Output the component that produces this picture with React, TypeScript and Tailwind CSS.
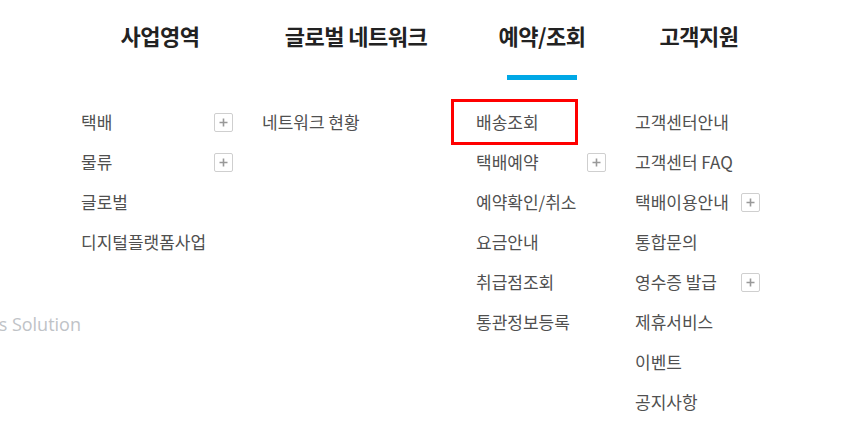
import React from "react";

type Item = { label: string; more?: boolean; marked?: boolean };

type Menu = {
  title: string;
  width: string;
  listPad: string;
  itemWidth: string;
  active?: boolean;
  items: Item[];
};

const menus: Menu[] = [
  {
    title: "사업영역",
    width: "w-[198px]",
    listPad: "pl-[20px]",
    itemWidth: "w-[152px]",
    items: [
      { label: "택배", more: true },
      { label: "물류", more: true },
      { label: "글로벌" },
      { label: "디지털플랫폼사업" },
    ],
  },
  {
    title: "글로벌 네트워크",
    width: "w-[194px]",
    listPad: "pl-[3px]",
    itemWidth: "w-[160px]",
    items: [{ label: "네트워크 현황" }],
  },
  {
    title: "예약/조회",
    width: "w-[178px]",
    listPad: "pl-[23px]",
    itemWidth: "w-[130px]",
    active: true,
    items: [
      { label: "배송조회", marked: true },
      { label: "택배예약", more: true },
      { label: "예약확인/취소" },
      { label: "요금안내" },
      { label: "취급점조회" },
      { label: "통관정보등록" },
    ],
  },
  {
    title: "고객지원",
    width: "w-[136px]",
    listPad: "pl-[4px]",
    itemWidth: "w-[125px]",
    items: [
      { label: "고객센터안내" },
      { label: "고객센터 FAQ" },
      { label: "택배이용안내", more: true },
      { label: "통합문의" },
      { label: "영수증 발급", more: true },
      { label: "제휴서비스" },
      { label: "이벤트" },
      { label: "공지사항" },
    ],
  },
];

function PlusBox() {
  return (
    <span className="flex h-[19px] w-[19px] shrink-0 items-center justify-center rounded-[2px] border border-[#cfcfcf] bg-white">
      <svg width="9" height="9" viewBox="0 0 9 9">
        <path d="M4.5 0.5v8M0.5 4.5h8" stroke="#999" strokeWidth="1.6" />
      </svg>
    </span>
  );
}

function MenuColumn({ menu }: { menu: Menu }) {
  return (
    <div className={`flex shrink-0 flex-col ${menu.width}`}>
      <div className="flex h-[75px] items-center justify-center whitespace-nowrap pb-[5px] text-[22px] font-bold tracking-[-0.5px] text-[#222]">
        {menu.title}
      </div>
      <div className="flex h-[5px] justify-center">
        {menu.active && <span className="w-[70px] bg-[#00a8e6]" />}
      </div>
      <ul className={`flex flex-col pt-[22px] ${menu.listPad}`}>
        {menu.items.map((it) => (
          <li
            key={it.label}
            className={`relative flex h-[40px] items-center justify-between whitespace-nowrap text-[17px] text-[#505050] ${menu.itemWidth}`}
          >
            <span>{it.label}</span>
            {it.more && <PlusBox />}
            {it.marked && (
              <span className="absolute left-[-25px] top-[-3px] h-[46px] w-[127px] border-[3px] border-[#f00]" />
            )}
          </li>
        ))}
      </ul>
    </div>
  );
}

export default function App() {
  return (
    <div
      className="relative h-[444px] w-[867px] overflow-hidden bg-white"
      style={{ fontFamily: '"Noto Sans CJK KR", "Noto Sans", sans-serif' }}
    >
      <span
        className="absolute right-[786px] top-[311px] whitespace-nowrap text-[18px] text-[#bfc3c7]"
        style={{ fontFamily: '"Open Sans", sans-serif' }}
      >
        Total Logistics Solution
      </span>
      <div className="flex pl-[61px]">
        {menus.map((m) => (
          <MenuColumn key={m.title} menu={m} />
        ))}
      </div>
    </div>
  );
}
